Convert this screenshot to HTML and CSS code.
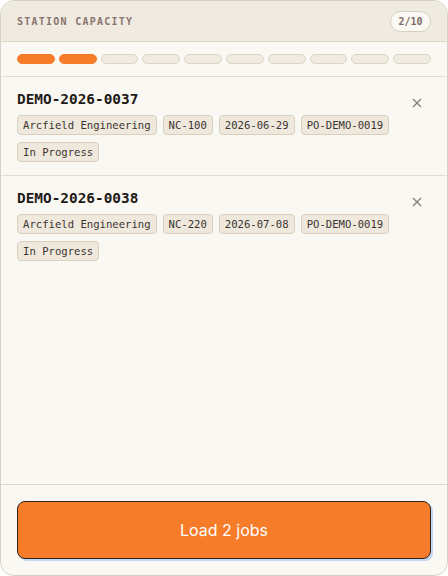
FILE: index.html
```html
<!DOCTYPE html>
<html lang="en">
<head>
<meta charset="utf-8">
<link rel="stylesheet" href="styles.css">
</head>
<body>
<div class="card">
  <div class="header">
    <span class="title">STATION CAPACITY</span>
    <span class="badge">2/10</span>
  </div>
  <div class="progress">
    <span class="seg on"></span><span class="seg on"></span><span class="seg"></span><span class="seg"></span><span class="seg"></span><span class="seg"></span><span class="seg"></span><span class="seg"></span><span class="seg"></span><span class="seg"></span>
  </div>
  <div class="list">
    <div class="job">
      <div class="job-main">
        <div class="job-id">DEMO-2026-0037</div>
        <div class="tags">
          <span class="tag">Arcfield Engineering</span>
          <span class="tag">NC-100</span>
          <span class="tag">2026-06-29</span>
          <span class="tag">PO-DEMO-0019</span>
          <span class="tag">In Progress</span>
        </div>
      </div>
      <button class="close" aria-label="Remove"><svg width="10" height="10" viewBox="0 0 10 10"><path d="M1 1L9 9M9 1L1 9" stroke="#8a7b78" stroke-width="1.3" fill="none"/></svg></button>
    </div>
    <div class="job">
      <div class="job-main">
        <div class="job-id">DEMO-2026-0038</div>
        <div class="tags">
          <span class="tag">Arcfield Engineering</span>
          <span class="tag">NC-220</span>
          <span class="tag">2026-07-08</span>
          <span class="tag">PO-DEMO-0019</span>
          <span class="tag">In Progress</span>
        </div>
      </div>
      <button class="close" aria-label="Remove"><svg width="10" height="10" viewBox="0 0 10 10"><path d="M1 1L9 9M9 1L1 9" stroke="#8a7b78" stroke-width="1.3" fill="none"/></svg></button>
    </div>
  </div>
  <div class="footer">
    <button class="load">Load 2 jobs</button>
  </div>
</div>
</body>
</html>
```
FILE: styles.css
```css
* { box-sizing: border-box; }
html, body { margin: 0; padding: 0; background: #ffffff; }
body { width: 448px; height: 576px; }
.card {
  width: 448px;
  height: 576px;
  background: #faf8f3;
  border: 1px solid #d8d1c2;
  border-radius: 14px;
  overflow: hidden;
  display: flex;
  flex-direction: column;
  font-family: "DejaVu Sans Mono", "Liberation Mono", monospace;
}
.header {
  height: 41px;
  background: #efebe1;
  border-bottom: 1px solid #dcd5c6;
  display: flex;
  align-items: center;
  justify-content: space-between;
  padding: 0 16px;
  flex: none;
}
.title {
  font-size: 10px;
  font-weight: bold;
  letter-spacing: 1.25px;
  color: #8b736d;
}
.badge {
  height: 21px;
  width: 41px;
  border: 1px solid #d8d0c1;
  border-radius: 11px;
  background: #faf8f3;
  font-size: 10px;
  font-weight: bold;
  color: #7f6b68;
  display: flex;
  align-items: center;
  justify-content: center;
}
.progress {
  display: flex;
  gap: 4px;
  padding: 12px 16px 12px;
  border-bottom: 1px solid #e3ddd0;
  flex: none;
}
.seg {
  flex: 1;
  height: 10px;
  border-radius: 5px;
  background: #efebe1;
  border: 1px solid #dcd4c4;
}
.seg.on { background: #f77c2a; border-color: #f77c2a; }
.list { flex: 1; }
.job {
  display: flex;
  align-items: flex-start;
  padding: 13px 16px 13px;
}
.job + .job { border-top: 1px solid #e3ddd0; }
.job-main { flex: 1; }
.job-id {
  font-size: 14.4px;
  font-weight: bold;
  line-height: 18px;
  color: #1f1a17;
  margin-bottom: 7px;
}
.tags {
  display: flex;
  flex-wrap: wrap;
  gap: 7px 6px;
}
.tag {
  height: 20px;
  line-height: 18px;
  padding: 0 5px;
  font-size: 10.6px;
  color: #3b3431;
  background: #efe9dd;
  border: 1px solid #d9d0be;
  border-radius: 4px;
}
.close {
  background: none;
  border: none;
  padding: 0;
  margin: 8px 9px 0 0;
  width: 10px;
  height: 10px;
  display: flex;
}
.footer {
  border-top: 1px solid #e0d9cb;
  padding: 16px 16px 16px;
  flex: none;
}
.load {
  width: 414px;
  height: 58px;
  background: #f77c2a;
  border: 1px solid #2b2521;
  border-radius: 8px;
  box-shadow: 2px 2px 0 #c6d5ef;
  color: #ffffff;
  font-family: Inter, "Noto Sans", sans-serif;
  font-size: 16px;
  font-weight: 400;
  display: flex;
  align-items: center;
  justify-content: center;
}
```
